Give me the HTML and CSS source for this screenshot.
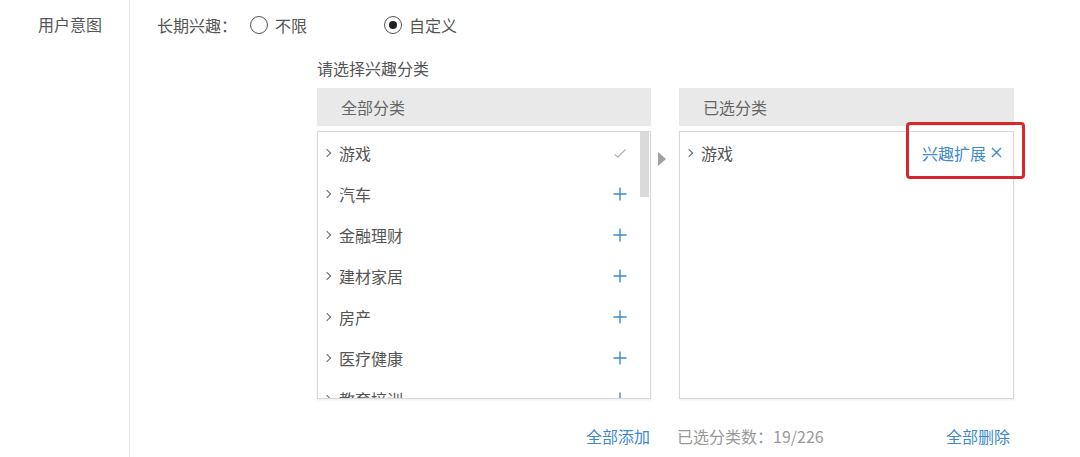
FILE: index.html
```html
<!DOCTYPE html>
<html lang="zh-CN">

<head>
    <meta charset="UTF-8">
    <meta name="viewport" content="width=device-width, initial-scale=1.0">
    <title>用户意图</title>
    <link rel="stylesheet" href="styles.css">
</head>

<body>
    <div class="page">
        <!-- 左侧标签栏 -->
        <div class="side">用户意图</div>

        <div class="content">
            <div class="interest-row">
                <span class="field-label">长期兴趣：</span>
                <label class="radio"><span class="radio-dot"></span>不限</label>
                <label class="radio checked"><span class="radio-dot"></span>自定义</label>
            </div>

            <div class="picker">
                <div class="picker-title">请选择兴趣分类</div>

                <div class="picker-grid">
                    <div class="panel-head">全部分类</div>
                    <div class="gap-cell"></div>
                    <div class="panel-head">已选分类</div>

                    <!-- 全部分类列表 -->
                    <div class="panel-box">
                        <ul class="cat-list">
                            <li><span class="chev"></span><span class="name">游戏</span>
                                <svg class="ico" viewBox="0 0 14 14" width="14" height="14"><path d="M1.5 8.5 L5 11 L12.5 3.5" fill="none" stroke="#b3b3b3" stroke-width="1.2"/></svg></li>
                            <li><span class="chev"></span><span class="name">汽车</span>
                                <svg class="ico" viewBox="0 0 14 14" width="14" height="14"><path d="M7 0.5 V13.5 M0.5 7 H13.5" stroke="#3d8ad0" stroke-width="1.4"/></svg></li>
                            <li><span class="chev"></span><span class="name">金融理财</span>
                                <svg class="ico" viewBox="0 0 14 14" width="14" height="14"><path d="M7 0.5 V13.5 M0.5 7 H13.5" stroke="#3d8ad0" stroke-width="1.4"/></svg></li>
                            <li><span class="chev"></span><span class="name">建材家居</span>
                                <svg class="ico" viewBox="0 0 14 14" width="14" height="14"><path d="M7 0.5 V13.5 M0.5 7 H13.5" stroke="#3d8ad0" stroke-width="1.4"/></svg></li>
                            <li><span class="chev"></span><span class="name">房产</span>
                                <svg class="ico" viewBox="0 0 14 14" width="14" height="14"><path d="M7 0.5 V13.5 M0.5 7 H13.5" stroke="#3d8ad0" stroke-width="1.4"/></svg></li>
                            <li><span class="chev"></span><span class="name">医疗健康</span>
                                <svg class="ico" viewBox="0 0 14 14" width="14" height="14"><path d="M7 0.5 V13.5 M0.5 7 H13.5" stroke="#3d8ad0" stroke-width="1.4"/></svg></li>
                            <li><span class="chev"></span><span class="name">教育培训</span>
                                <svg class="ico" viewBox="0 0 14 14" width="14" height="14"><path d="M7 0.5 V13.5 M0.5 7 H13.5" stroke="#3d8ad0" stroke-width="1.4"/></svg></li>
                        </ul>
                        <div class="scrollbar"><div class="thumb"></div></div>
                    </div>

                    <div class="gap-cell"><span class="move-arrow"></span></div>

                    <!-- 已选分类 -->
                    <div class="panel-box open">
                        <ul class="cat-list selected">
                            <li><span class="chev"></span><span class="name">游戏</span>
                                <span class="expand">兴趣扩展
                                    <svg viewBox="0 0 11 11" width="11" height="11"><path d="M1 1 L10 10 M10 1 L1 10" stroke="#3d8ad0" stroke-width="1.4"/></svg>
                                </span></li>
                        </ul>
                    </div>

                    <div class="panel-foot right"><a href="#" class="link">全部添加</a></div>
                    <div class="gap-cell"></div>
                    <div class="panel-foot split">
                        <span class="count">已选分类数：19/226</span>
                        <a href="#" class="link">全部删除</a>
                    </div>
                </div>
            </div>
        </div>
    </div>
</body>

</html>
```

FILE: styles.css
```css
/* 基础 */
body {
    margin: 0;
    background: #fff;
    font-family: "Noto Sans CJK SC", "Noto Sans", sans-serif;
    font-size: 16px;
    line-height: 24px;
    color: #555;
}

ul {
    margin: 0;
    padding: 0;
    list-style: none;
}

.page {
    display: flex;
    height: 457px;
}

/* 左侧标签 */
.side {
    width: 91px;
    padding: 12px 0 0 38px;
    border-right: 1px solid #e6e6e6;
    color: #555;
}

.content {
    padding-left: 27px;
}

/* 长期兴趣 单选 */
.interest-row {
    display: flex;
    align-items: center;
    padding-top: 13px;
}

.field-label {
    width: 93px;
    color: #555;
}

.radio {
    display: flex;
    align-items: center;
    gap: 7px;
    width: 134px;
    color: #555;
}

.radio-dot {
    width: 16px;
    height: 16px;
    border: 1.5px solid #555;
    border-radius: 50%;
    display: flex;
    align-items: center;
    justify-content: center;
}

.radio.checked .radio-dot::after {
    content: "";
    width: 8px;
    height: 8px;
    border-radius: 50%;
    background: #222;
}

/* 兴趣分类选择 */
.picker {
    margin-left: 160px;
}

.picker-title {
    margin-top: 19px;
    color: #555;
}

.picker-grid {
    display: grid;
    grid-template-columns: 334px 28px 335px;
    grid-template-rows: 38px 268px auto;
    margin-top: 8px;
}

.panel-head {
    background: #e9e9e9;
    padding-left: 24px;
    line-height: 38px;
    color: #666;
}

.panel-box {
    margin-top: 5px;
    height: 268px;
    box-sizing: border-box;
    border: 1px solid #d8d8d8;
    box-shadow: 0 1px 2px rgba(0, 0, 0, 0.08);
    position: relative;
    overflow: hidden;
    display: flex;
}

.panel-box.open {
    overflow: visible;
}

.gap-cell {
    display: flex;
    justify-content: center;
}

.move-arrow {
    margin-top: 26px;
    margin-left: -6px;
    width: 0;
    height: 0;
    border-top: 7px solid transparent;
    border-bottom: 7px solid transparent;
    border-left: 8px solid #a0a0a0;
}

.cat-list {
    flex: 1;
}

.cat-list li {
    display: flex;
    align-items: center;
    height: 41px;
    padding: 0 13px 0 6px;
    color: #555;
}

.chev {
    width: 5px;
    height: 5px;
    border-right: 1.2px solid #666;
    border-bottom: 1.2px solid #666;
    transform: rotate(-45deg);
    margin-right: 9px;
}

.cat-list .name {
    flex: 1;
}

.cat-list.selected li {
    padding-right: 11px;
}

.expand {
    position: relative;
    display: flex;
    align-items: center;
    gap: 5px;
    color: #3d8ad0;
}

/* 红色标注框 */
.expand::after {
    content: "";
    position: absolute;
    top: -19px;
    bottom: -14px;
    left: -16px;
    right: -23px;
    border: 3px solid #d8262d;
    border-radius: 4px;
}

.scrollbar {
    width: 9px;
    margin-right: 1px;
}

.thumb {
    height: 65px;
    background: #dadada;
}

/* 底部操作 */
.panel-foot {
    margin-top: 30px;
    display: flex;
}

.panel-foot.right {
    justify-content: flex-end;
    padding-right: 1px;
}

.panel-foot.split {
    justify-content: space-between;
    margin-left: -2px;
    padding-right: 4px;
}

.count {
    color: #999;
}

.link {
    color: #3d8ad0;
    text-decoration: none;
}
```
